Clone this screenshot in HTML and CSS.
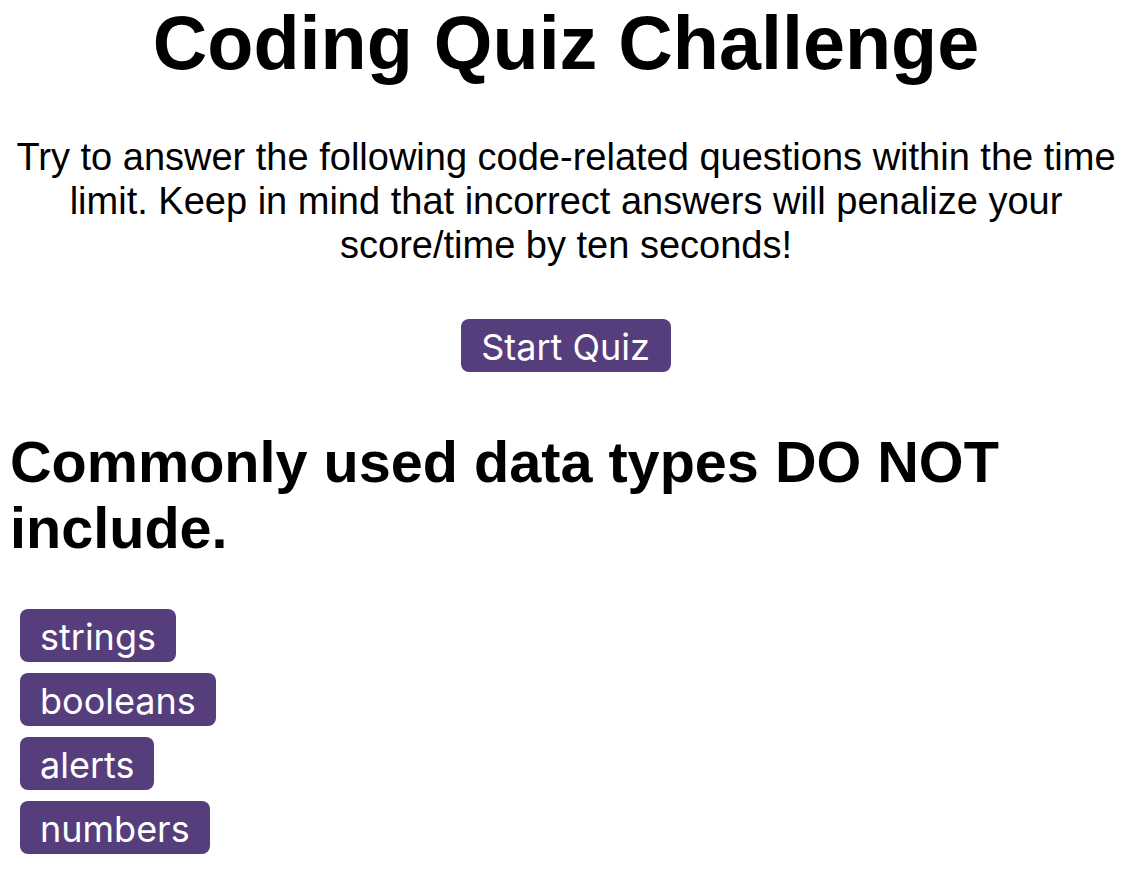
FILE: index.html
```html
<!DOCTYPE html>
<html lang="en">
<head>
<meta charset="utf-8">
<title>Coding Quiz Challenge</title>
<link rel="stylesheet" href="styles.css">
</head>
<body>
  <main class="quiz">
    <section class="intro">
      <h1 class="title">Coding Quiz Challenge</h1>
      <p class="lead">Try to answer the following code-related questions within the time limit. Keep in mind that incorrect answers will penalize your score/time by ten seconds!</p>
      <button class="btn start">Start Quiz</button>
    </section>
    <section class="question">
      <h2 class="question-title">Commonly used data types DO NOT include.</h2>
      <div class="answers">
        <button class="btn answer">strings</button>
        <button class="btn answer">booleans</button>
        <button class="btn answer">alerts</button>
        <button class="btn answer">numbers</button>
      </div>
    </section>
  </main>
</body>
</html>
```

FILE: styles.css
```css
html, body {
  background: #ffffff;
}
body {
  margin: 0 10px;
  font-family: "Liberation Sans", Arial, Helvetica, sans-serif;
  color: #000;
}
.intro {
  text-align: center;
}
.title {
  margin: 0;
  font-size: 75.5px;
  font-weight: bold;
  line-height: 87px;
}
.lead {
  margin: 48px 0 0;
  font-size: 38px;
  line-height: 44px;
}
.btn {
  font-family: Inter, "Noto Sans", sans-serif;
  background: #563d7c;
  color: #fff;
  border: none;
  border-radius: 8px;
  font-size: 36px;
  line-height: 44px;
  padding: 6px 21px 3px 20px;
  cursor: pointer;
}
.start {
  margin-top: 52px;
}
.question-title {
  margin: 57px 0 0;
  font-size: 57.6px;
  font-weight: bold;
  line-height: 66px;
}
.answers {
  display: flex;
  flex-direction: column;
  align-items: flex-start;
  gap: 11px;
  margin-top: 48px;
  padding-left: 10px;
}
.answer {
  padding-right: 20px;
}
```
